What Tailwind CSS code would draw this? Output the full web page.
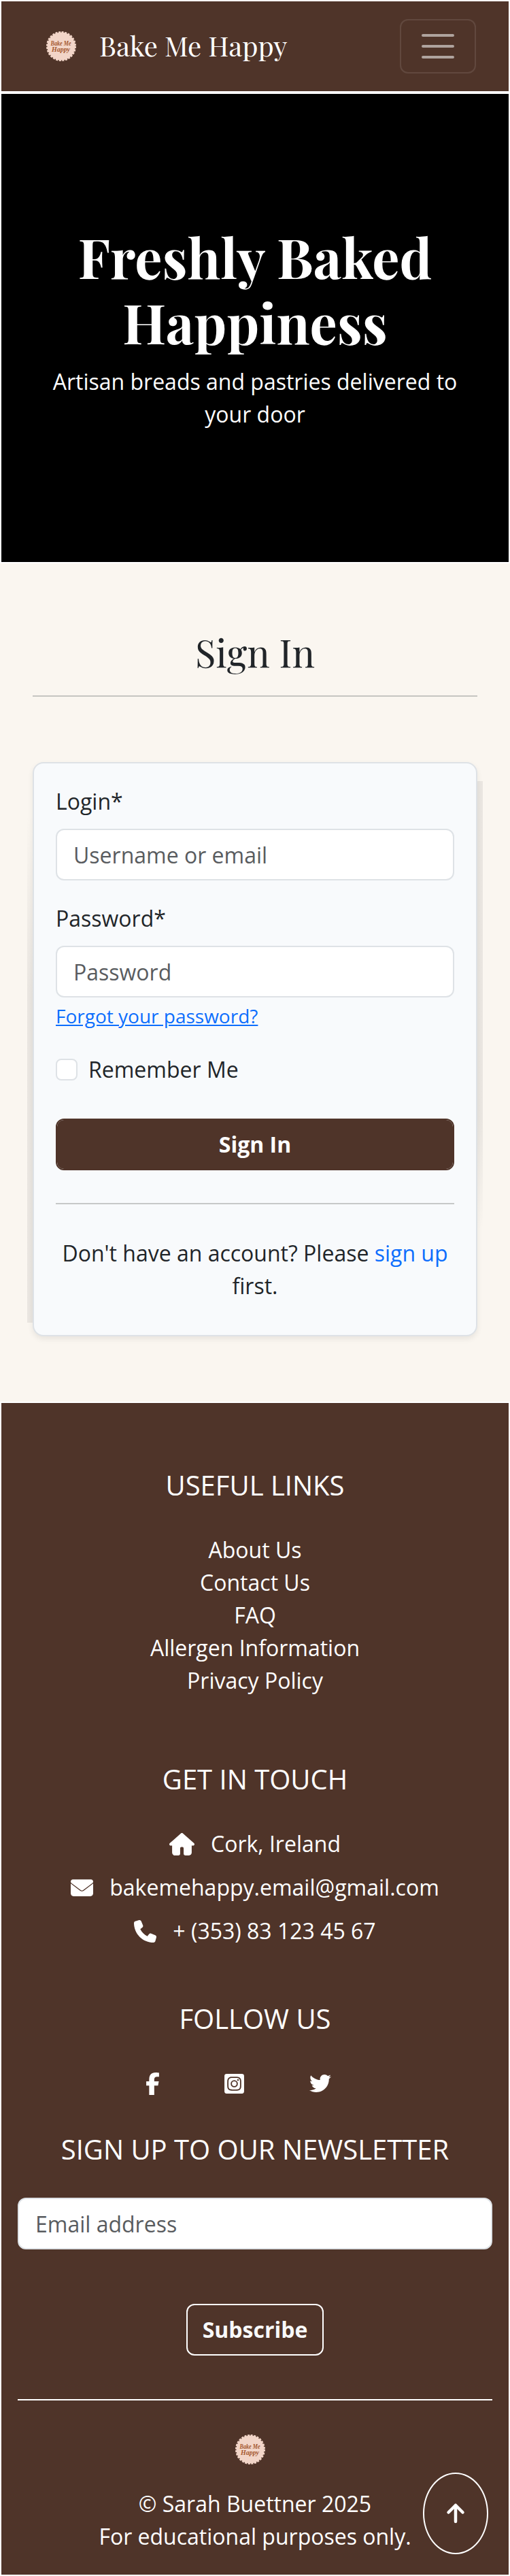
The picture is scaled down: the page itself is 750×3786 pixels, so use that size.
<!DOCTYPE html>
<html lang="en">
<head>
<meta charset="utf-8">
<title>Bake Me Happy</title>
<script src="https://cdn.jsdelivr.net/npm/@tailwindcss/browser@4"></script>
</head>
<body class="w-[750px] bg-[#faf6f0] font-['Open_Sans','Noto_Sans',sans-serif] text-[32px] leading-[48px] text-[#212529]">
<svg class="hidden">
  <symbol id="logo" viewBox="0 0 44 44">
    <circle cx="22" cy="22" r="20.5" fill="#f2d5c8"/>
    <circle cx="22" cy="22" r="20.5" fill="none" stroke="#f2d5c8" stroke-width="3" stroke-dasharray="3 1.6"/>
    <g fill="#a4572e" font-family="Liberation Serif, serif" font-style="italic" font-weight="bold" text-anchor="middle">
      <text x="21.5" y="21" font-size="10" textLength="30" lengthAdjust="spacingAndGlyphs">Bake Me</text>
      <text x="21.5" y="30" font-size="10.5" textLength="27" lengthAdjust="spacingAndGlyphs">Happy</text>
    </g>
  </symbol>
</svg>
<header class="flex h-[136px] items-center border-2 border-white bg-[#4f3429] pl-[66px] pr-12">
  <svg class="size-11"><use href="#logo"/></svg>
  <span class="mb-[2px] ml-[34px] whitespace-nowrap font-['Playfair_Display','Liberation_Serif',serif] text-[40px] leading-[60px] text-white">Bake Me Happy</span>
  <button class="ml-auto flex h-20 w-28 items-center justify-center rounded-xl border-2 border-white/10" aria-label="Menu">
    <svg class="size-[60px]" viewBox="0 0 30 30"><path stroke="#fff" stroke-opacity=".55" stroke-linecap="round" stroke-width="2" d="M4 7h22M4 15h22M4 23h22"/></svg>
  </button>
</header>
<section class="h-[692px] border-2 border-white bg-black px-12 pt-[191px] text-center text-white">
  <h1 class="font-['Playfair_Display','Liberation_Serif',serif] text-[80px] font-bold leading-[96px]">Freshly Baked<br>Happiness</h1>
  <p class="mt-4">Artisan breads and pastries delivered to<br>your door</p>
</section>
<main class="h-[1232px] px-12 pt-24">
  <h2 class="text-center font-['Playfair_Display','Liberation_Serif',serif] text-[56px] leading-[67px]">Sign In</h2>
  <hr class="mt-[31px] border-t-2 border-[#c6c5c1]">
  <div class="relative mt-24">
    <div class="absolute -left-2 top-20 h-[744px] w-2 bg-linear-to-b from-transparent via-[#eae6e1] via-35% to-[#eae6e1]"></div>
    <div class="absolute -right-2 top-7 h-[660px] w-2 bg-linear-to-b from-[#eae6e1] via-[#eae6e1] via-75% to-transparent"></div>
    <form class="relative h-[844px] rounded-2xl border-2 border-[#dee2e6] bg-[#f8fafc] px-8 pt-8 shadow-[0_4px_8px_rgba(0,0,0,0.075)]">
      <label class="block">Login*</label>
      <input class="mt-4 block h-[76px] w-full rounded-xl border-2 border-[#dee2e6] bg-white px-6 placeholder:text-[#595c5f]" placeholder="Username or email">
      <label class="mt-8 block">Password*</label>
      <input class="mt-4 block h-[76px] w-full rounded-xl border-2 border-[#dee2e6] bg-white px-6 placeholder:text-[#595c5f]" placeholder="Password">
      <a class="mt-[6px] block text-[28px] leading-[42px] text-[#0d6efd] underline">Forgot your password?</a>
      <div class="mt-[34px] flex items-center">
        <span class="size-8 rounded-lg border-2 border-[#dee2e6] bg-white"></span>
        <span class="ml-4">Remember Me</span>
      </div>
      <button class="mt-12 h-[76px] w-full rounded-xl border-2 border-[#4f3429] bg-[#4f3429] bg-clip-padding font-bold text-white">Sign In</button>
      <hr class="mt-12 border-t-2 border-[#c6c8c8]">
      <p class="mt-12 text-center">Don't have an account? Please <span class="text-[#0d6efd]">sign up</span><br>first.</p>
    </form>
  </div>
</main>
<footer class="relative h-[1726px] border-2 border-white bg-[#4f3429] px-6 pt-[97px] text-center text-white">
  <h3 class="text-[40px]">USEFUL LINKS</h3>
  <ul class="mt-[47px]">
    <li>About Us</li><li>Contact Us</li><li>FAQ</li><li>Allergen Information</li><li>Privacy Policy</li>
  </ul>
  <h3 class="mt-[97px] text-[40px]">GET IN TOUCH</h3>
  <div class="mt-[47px] flex flex-col items-center gap-4">
    <div class="flex items-center"><svg class="mr-6 h-[33px] w-[37px] fill-white" viewBox="0 0 576 512"><path d="M575.8 255.5c0 18-15 32.1-32 32.1h-32l.7 160.200c0 35.300-28 64.200-64 64.200H368c-22 0-40-18-40-40V352c0-17.700-14.300-32-32-32h-16c-17.700 0-32 14.300-32 32v120c0 22-18 40-40 40H128c-35 0-64-28-64-64V287.600H32c-18 0-32-14-32-32.100 0-9 3-17 10-24L266.400 8c7-7 15-8 22-8s15 2 21 7L564.800 231.500c8 7 12 15 11 24z"/></svg>Cork, Ireland</div>
    <div class="flex items-center"><svg class="mr-6 size-[33px] fill-white" viewBox="0 0 512 512"><path d="M48 64C21.500 64 0 85.500 0 112c0 15.100 7.100 29.300 19.200 38.400L236.800 313.600c11.400 8.500 27 8.500 38.400 0L492.800 150.400c12.100-9.100 19.200-23.300 19.200-38.400 0-26.500-21.500-48-48-48H48zM0 160V384c0 35.300 28.700 64 64 64H448c35.300 0 64-28.700 64-64V160L294.400 326c-22.800 17.100-54 17.100-76.800 0L0 160z"/></svg>bakemehappy.email@gmail.com</div>
    <div class="flex items-center"><svg class="mr-6 size-[33px] fill-white" viewBox="0 0 512 512"><path d="M164.900 24.600c-7.700-18.600-28-28.500-47.400-23.200l-88 24C12.100 30.200 0 46 0 64 0 311.400 200.600 512 448 512c18 0 33.800-12.100 38.600-29.500l24-88c5.300-19.400-4.600-39.700-23.200-47.400l-96-40c-16.300-6.800-35.200-2.100-46.300 11.600L304.700 368C234.300 334.700 177.300 277.700 144 207.300L193.300 167c13.700-11.200 18.400-30 11.600-46.300l-40-96z"/></svg>+ (353) 83 123 45 67</div>
  </div>
  <h3 class="mt-[81px] text-[40px]">FOLLOW US</h3>
  <div class="mt-[47px] flex h-12 items-center pl-[188px]">
    <svg class="h-[33px] w-[21px] fill-white" viewBox="0 0 320 512"><path d="M80 299.300V512H196V299.300h86.500l18-97.800H196V166.900c0-51.700 20.300-71.500 72.700-71.500 16.300 0 29.400.4 37 1.200V7.900C291.400 4 256.400 0 236.200 0 129.300 0 80 50.500 80 159.400v42.100H14v97.800H80z"/></svg>
    <svg class="ml-[95px] h-[33px] w-[29px] fill-white" viewBox="0 0 448 512"><path d="M224 202.660A53.340 53.340 0 1 0 277.360 256 53.380 53.380 0 0 0 224 202.660zm124.710-41a54 54 0 0 0-30.410-30.410c-21-8.290-71-6.430-94.300-6.430s-73.250-1.930-94.310 6.430a54 54 0 0 0-30.410 30.410c-8.280 21-6.430 71.050-6.430 94.330s-1.850 73.270 6.470 94.340a54 54 0 0 0 30.410 30.410c21 8.290 71 6.430 94.310 6.430s73.240 1.930 94.300-6.430a54 54 0 0 0 30.410-30.410c8.350-21 6.430-71.050 6.430-94.330s1.920-73.260-6.430-94.330zM224 338a82 82 0 1 1 82-82 81.900 81.900 0 0 1-82 82zm85.380-148.300a19.140 19.140 0 1 1 19.130-19.140 19.100 19.100 0 0 1-19.090 19.180zM400 32H48A48 48 0 0 0 0 80v352a48 48 0 0 0 48 48h352a48 48 0 0 0 48-48V80a48 48 0 0 0-48-48zm-17.120 290c-1.290 25.630-7.140 48.340-25.850 67s-41.400 24.630-67 25.850c-26.410 1.490-105.590 1.490-132 0-25.630-1.290-48.260-7.150-67-25.850s-24.630-41.420-25.850-67c-1.490-26.420-1.490-105.610 0-132 1.290-25.630 7.070-48.340 25.850-67s41.470-24.560 67-25.780c26.410-1.490 105.590-1.490 132 0 25.630 1.290 48.330 7.150 67 25.850s24.630 41.420 25.850 67.050c1.490 26.320 1.490 105.440 0 131.880z"/></svg>
    <svg class="ml-[96px] size-8 fill-white" viewBox="0 0 512 512"><path d="M459.370 151.716c.325 4.548.325 9.097.325 13.645 0 138.720-105.583 298.558-298.558 298.558-59.452 0-114.680-17.219-161.137-47.106 8.447.974 16.568 1.299 25.340 1.299 49.055 0 94.213-16.568 130.274-44.832-46.132-.975-84.792-31.188-98.112-72.772 6.498.974 12.995 1.624 19.818 1.624 9.421 0 18.843-1.300 27.614-3.573-48.081-9.747-84.143-51.980-84.143-102.985v-1.299c13.969 7.797 30.214 12.670 47.431 13.319-28.264-18.843-46.781-51.005-46.781-87.391 0-19.492 5.197-37.360 14.294-52.954 51.655 63.675 129.300 105.258 216.365 109.807-1.624-7.797-2.599-15.918-2.599-24.040 0-57.828 46.782-104.934 104.934-104.934 30.213 0 57.502 12.670 76.670 33.137 23.715-4.548 46.456-13.320 66.599-25.340-7.798 24.366-24.366 44.833-46.132 57.827 21.117-2.273 41.584-8.122 60.426-16.243-14.292 20.791-32.161 39.308-52.628 54.253z"/></svg>
  </div>
  <h3 class="mt-[49px] whitespace-nowrap text-[40px]">SIGN UP TO OUR NEWSLETTER</h3>
  <input class="mt-[47px] block h-[76px] w-full rounded-xl border-2 border-[#dee2e6] bg-white px-6 text-[#212529] placeholder:text-[#595c5f]" placeholder="Email address">
  <button class="mt-20 h-[76px] w-[202px] rounded-xl border-2 border-white font-bold text-[#f8f9fa]">Subscribe</button>
  <hr class="mt-16 border-t-2 border-white">
  <svg class="ml-[320px] mt-[50px] size-11"><use href="#logo"/></svg>
  <p class="mt-[34px]">© Sarah Buettner 2025<br>For educational purposes only.</p>
  <a class="absolute bottom-[30px] right-[30px] flex h-[120px] w-24 items-center justify-center rounded-[50%] border-2 border-white" aria-label="Back to top">
    <svg class="h-8 w-7" viewBox="0 0 28 32" fill="none" stroke="#fff" stroke-width="4.500" stroke-linecap="round" stroke-linejoin="round"><path d="M14 28V4M3.500 14.500 14 4l10.500 10.500"/></svg>
  </a>
</footer>
</body>
</html>
